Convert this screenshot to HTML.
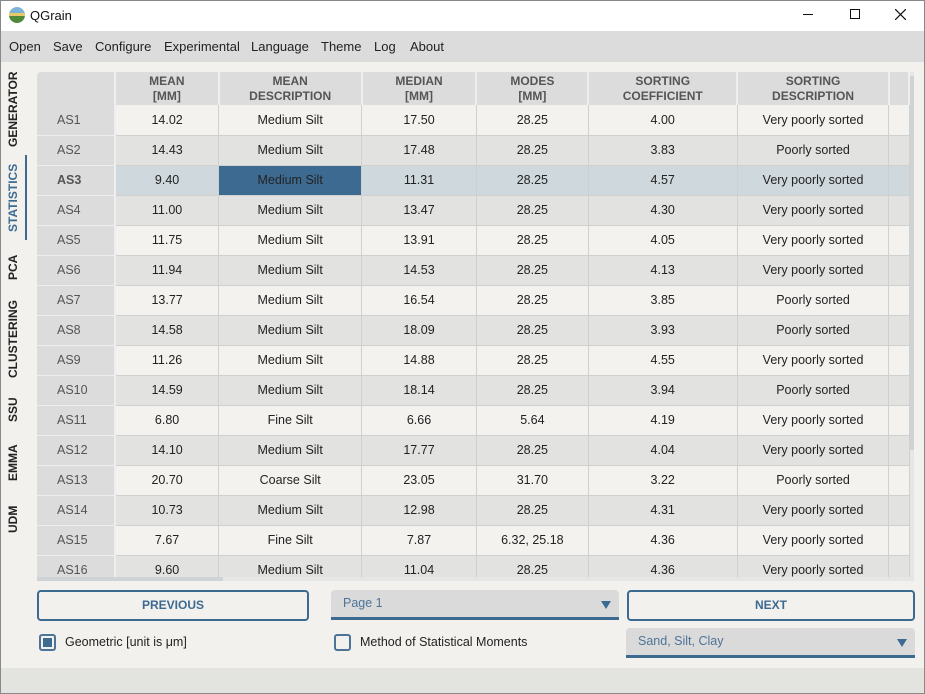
<!DOCTYPE html>
<html><head><meta charset="utf-8"><style>
*{margin:0;padding:0;box-sizing:border-box}
body{width:925px;height:694px;position:relative;background:#f2f1ee;font-family:"Liberation Sans",sans-serif;overflow:hidden}
.abs{position:absolute}
#title{left:0;top:0;width:925px;height:31px;background:#fff}
#menu{left:0;top:31px;width:925px;height:31px;background:#dcdcdc;font-size:13px;color:#222}
#menu span{position:absolute;top:8px}
.tab{position:absolute;left:1px;width:24px;writing-mode:vertical-rl;transform:rotate(180deg);font-weight:bold;font-size:12px;color:#222;text-align:center;display:flex;align-items:center;justify-content:center}
#wrap{left:37px;top:72px;width:873px;height:505px;overflow:hidden;background:#dcdcdc;border-radius:4px 0 0 0}
table{border-collapse:collapse;table-layout:fixed;font-size:12.5px;color:#222}
td,th{text-align:center;border-right:1px solid #d0d0ce;border-bottom:1px solid #d0d0ce;height:30px;white-space:nowrap}
th{background:#dcdcdc;color:#555;font-size:12px;line-height:15px;height:33px;border-right:2px solid #eee;border-bottom:none}
td.h{background:#dcdcdc;color:#555;text-align:left;padding-left:20px;border-right:2px solid #eee;border-bottom:1px solid #eee}
tr.o td{background:#f3f2ef}
tr.e td{background:#e2e2e0}
tr.s td{background:#cfd8dc}
tr.s td.h{background:#dcdcdc;font-weight:bold}
tr.s td.sel{background:#3d6a91;color:#222}
tr td.h{background:#dcdcdc}
.btn{position:absolute;border:2px solid #3d6a91;border-radius:4px;color:#3d6a91;font-weight:bold;font-size:12px;text-align:center;line-height:27px}
.combo{position:absolute;background:#dadada;border-bottom:3px solid #3d6a91;border-radius:4px 4px 0 0;color:#4e7398;font-size:12.5px;padding-left:12px}
.tri{position:absolute;right:8px;top:11px;width:0;height:0;border-left:5px solid transparent;border-right:5px solid transparent;border-top:8px solid #3d6a91}
.cb{position:absolute;width:17px;height:17px;border:2px solid #4e7398;border-radius:3px}
#frame{left:0;top:0;width:925px;height:694px;border:1px solid #888;pointer-events:none}
</style></head><body>
<div id="title" class="abs">
<svg class="abs" style="left:9px;top:7px" width="16" height="16" viewBox="0 0 16 16"><defs><clipPath id="c"><circle cx="8" cy="8" r="8"/></clipPath></defs><g clip-path="url(#c)"><rect width="16" height="7" fill="#7db3d9"/><rect y="6" width="16" height="3" fill="#e8c86a"/><rect y="9" width="16" height="7" fill="#4f8a3a"/></g></svg>
<span class="abs" style="left:30px;top:8px;font-size:13px;color:#111">QGrain</span>
<span class="abs" style="left:803px;top:14px;width:10px;height:1px;background:#111"></span>
<span class="abs" style="left:850px;top:9px;width:10px;height:10px;border:1px solid #111"></span>
<svg class="abs" style="left:895px;top:9px" width="11" height="11"><path d="M0 0L11 11M11 0L0 11" stroke="#111" stroke-width="1.2"/></svg>
</div>
<div id="menu" class="abs"><span style="left:9px">Open</span><span style="left:53px">Save</span><span style="left:95px">Configure</span><span style="left:164px">Experimental</span><span style="left:251px">Language</span><span style="left:321px">Theme</span><span style="left:374px">Log</span><span style="left:410px">About</span></div>
<div class="tab" style="top:72px;height:74px">GENERATOR</div>
<div class="tab" style="top:155px;height:85px;color:#3d6a91">STATISTICS</div>
<div class="abs" style="left:25px;top:155px;width:2px;height:85px;background:#3d6a91"></div>
<div class="tab" style="top:252px;height:30px">PCA</div>
<div class="tab" style="top:300px;height:78px">CLUSTERING</div>
<div class="tab" style="top:396px;height:28px">SSU</div>
<div class="tab" style="top:443px;height:40px">EMMA</div>
<div class="tab" style="top:503px;height:32px">UDM</div>
<div id="wrap" class="abs">
<table>
<colgroup><col style="width:78px"><col style="width:104px"><col style="width:143px"><col style="width:115px"><col style="width:112px"><col style="width:149px"><col style="width:152px"><col style="width:20px"></colgroup>
<tr><th style="height:32px"></th><th>MEAN<br>[MM]</th><th>MEAN<br>DESCRIPTION</th><th>MEDIAN<br>[MM]</th><th>MODES<br>[MM]</th><th>SORTING<br>COEFFICIENT</th><th>SORTING<br>DESCRIPTION</th><th></th></tr>
<tr class="o"><td class="h">AS1</td><td>14.02</td><td>Medium Silt</td><td>17.50</td><td>28.25</td><td>4.00</td><td>Very poorly sorted</td><td></td></tr>
<tr class="e"><td class="h">AS2</td><td>14.43</td><td>Medium Silt</td><td>17.48</td><td>28.25</td><td>3.83</td><td>Poorly sorted</td><td></td></tr>
<tr class="s"><td class="h">AS3</td><td>9.40</td><td class="sel">Medium Silt</td><td>11.31</td><td>28.25</td><td>4.57</td><td>Very poorly sorted</td><td></td></tr>
<tr class="e"><td class="h">AS4</td><td>11.00</td><td>Medium Silt</td><td>13.47</td><td>28.25</td><td>4.30</td><td>Very poorly sorted</td><td></td></tr>
<tr class="o"><td class="h">AS5</td><td>11.75</td><td>Medium Silt</td><td>13.91</td><td>28.25</td><td>4.05</td><td>Very poorly sorted</td><td></td></tr>
<tr class="e"><td class="h">AS6</td><td>11.94</td><td>Medium Silt</td><td>14.53</td><td>28.25</td><td>4.13</td><td>Very poorly sorted</td><td></td></tr>
<tr class="o"><td class="h">AS7</td><td>13.77</td><td>Medium Silt</td><td>16.54</td><td>28.25</td><td>3.85</td><td>Poorly sorted</td><td></td></tr>
<tr class="e"><td class="h">AS8</td><td>14.58</td><td>Medium Silt</td><td>18.09</td><td>28.25</td><td>3.93</td><td>Poorly sorted</td><td></td></tr>
<tr class="o"><td class="h">AS9</td><td>11.26</td><td>Medium Silt</td><td>14.88</td><td>28.25</td><td>4.55</td><td>Very poorly sorted</td><td></td></tr>
<tr class="e"><td class="h">AS10</td><td>14.59</td><td>Medium Silt</td><td>18.14</td><td>28.25</td><td>3.94</td><td>Poorly sorted</td><td></td></tr>
<tr class="o"><td class="h">AS11</td><td>6.80</td><td>Fine Silt</td><td>6.66</td><td>5.64</td><td>4.19</td><td>Very poorly sorted</td><td></td></tr>
<tr class="e"><td class="h">AS12</td><td>14.10</td><td>Medium Silt</td><td>17.77</td><td>28.25</td><td>4.04</td><td>Very poorly sorted</td><td></td></tr>
<tr class="o"><td class="h">AS13</td><td>20.70</td><td>Coarse Silt</td><td>23.05</td><td>31.70</td><td>3.22</td><td>Poorly sorted</td><td></td></tr>
<tr class="e"><td class="h">AS14</td><td>10.73</td><td>Medium Silt</td><td>12.98</td><td>28.25</td><td>4.31</td><td>Very poorly sorted</td><td></td></tr>
<tr class="o"><td class="h">AS15</td><td>7.67</td><td>Fine Silt</td><td>7.87</td><td>6.32, 25.18</td><td>4.36</td><td>Very poorly sorted</td><td></td></tr>
<tr class="e"><td class="h">AS16</td><td>9.60</td><td>Medium Silt</td><td>11.04</td><td>28.25</td><td>4.36</td><td>Very poorly sorted</td><td></td></tr>
</table>
</div>
<div class="abs" style="left:910px;top:72px;width:4px;height:509px;background:#e6e6e4"></div>
<div class="abs" style="left:910px;top:76px;width:4px;height:374px;background:#cfd3d6"></div>
<div class="abs" style="left:37px;top:577px;width:873px;height:4px;background:#e6e6e4"></div>
<div class="abs" style="left:37px;top:577px;width:186px;height:4px;background:#cfd3d6"></div>
<div class="btn" style="left:37px;top:590px;width:272px;height:31px">PREVIOUS</div>
<div class="combo" style="left:331px;top:590px;width:288px;height:30px;line-height:27px">Page 1<div class="tri"></div></div>
<div class="btn" style="left:627px;top:590px;width:288px;height:31px">NEXT</div>
<div class="cb" style="left:39px;top:634px"><div style="position:absolute;left:2px;top:2px;width:9px;height:9px;background:#3d6a91"></div></div>
<span class="abs" style="left:65px;top:635px;font-size:12.5px;color:#222">Geometric [unit is μm]</span>
<div class="cb" style="left:334px;top:634px"></div>
<span class="abs" style="left:360px;top:635px;font-size:12.5px;color:#222">Method of Statistical Moments</span>
<div class="combo" style="left:626px;top:628px;width:289px;height:30px;line-height:27px">Sand, Silt, Clay<div class="tri"></div></div>
<div class="abs" style="left:0;top:668px;width:925px;height:26px;background:#e3e3e0"></div>
<div id="frame" class="abs"></div>
</body></html>
